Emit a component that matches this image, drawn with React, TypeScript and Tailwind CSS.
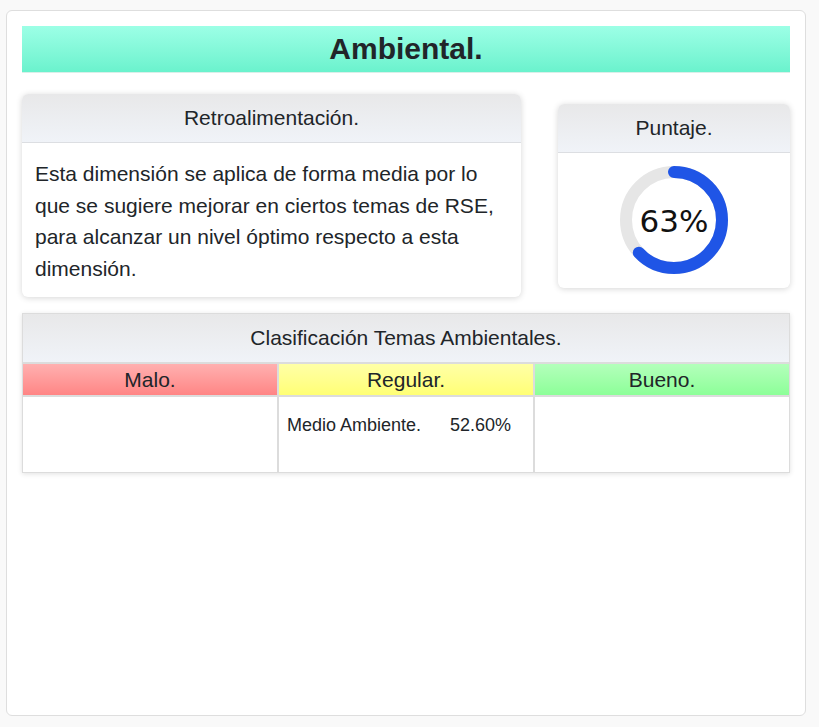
const temas = {
  malo: [] as { nombre: string; valor: string }[],
  regular: [{ nombre: "Medio Ambiente.", valor: "52.60%" }],
  bueno: [] as { nombre: string; valor: string }[],
};

const Ring = ({ value }: { value: number }) => {
  const r = 48;
  const c = 2 * Math.PI * r;
  return (
    <svg width="110" height="110" viewBox="0 0 110 110">
      <circle cx="55" cy="55" r={r} fill="none" stroke="#e6e6e6" strokeWidth="12" />
      <circle
        cx="55"
        cy="55"
        r={r}
        fill="none"
        stroke="#1f55e6"
        strokeWidth="12"
        strokeLinecap="round"
        strokeDasharray={`${(c * value) / 100} ${c}`}
        transform="rotate(-90 55 55)"
      />
      <text
        x="55"
        y="58"
        textAnchor="middle"
        dominantBaseline="middle"
        fontSize="31"
        fill="#111"
        style={{ fontFamily: '"DejaVu Sans", sans-serif' }}
      >
        {value}%
      </text>
    </svg>
  );
};

const Cell = ({ items }: { items: { nombre: string; valor: string }[] }) => (
  <div className="bg-white h-[75px] px-[8px] pt-[15px] text-[18px] text-[#212529]">
    {items.map((t) => (
      <div key={t.nombre} className="flex">
        <span className="w-[163px]">{t.nombre}</span>
        <span>{t.valor}</span>
      </div>
    ))}
  </div>
);

export default function App() {
  return (
    <div
      className="bg-[#f9f9f9] h-[727px] pl-[6px] pt-[10px] text-[#212529]"
      style={{ fontFamily: '"Liberation Sans", Arial, sans-serif' }}
    >
      <div className="w-[800px] h-[706px] bg-white border border-[#dedede] rounded-md px-[15px] pt-[15px]">
        <div className="h-[47px] flex items-center justify-center bg-gradient-to-b from-[#9cffe6] to-[#6af2cd] border-b border-[#d9efe9]">
          <h1 className="text-[30px] font-bold leading-none">Ambiental.</h1>
        </div>

        <div className="flex items-center justify-between mt-[21px]">
          <div className="w-[499px] rounded-md bg-white shadow-[0_1px_6px_rgba(0,0,0,0.16)] overflow-hidden">
            <div className="h-[49px] flex items-center justify-center bg-gradient-to-b from-[#e8e8e9] to-[#f0f3f8] border-b border-[#dcdee2] text-[21px]">
              Retroalimentación.
            </div>
            <p className="px-[13px] pt-[15px] pb-[13px] text-[21px] leading-[31.5px]">
              Esta dimensión se aplica de forma media por lo que se sugiere mejorar en ciertos temas de RSE, para alcanzar un nivel óptimo respecto a esta dimensión.
            </p>
          </div>

          <div className="w-[232px] rounded-md bg-white shadow-[0_1px_6px_rgba(0,0,0,0.16)] overflow-hidden">
            <div className="h-[49px] flex items-center justify-center bg-gradient-to-b from-[#e8e8e9] to-[#f0f3f8] border-b border-[#dcdee2] text-[21px]">
              Puntaje.
            </div>
            <div className="flex justify-center pt-[12px] pb-[13px]">
              <Ring value={63} />
            </div>
          </div>
        </div>

        <div className="mt-[16px] border border-[#dcdcdc] shadow-[0_1px_5px_rgba(0,0,0,0.12)] bg-[#dcdcdc]">
          <div className="h-[48px] flex items-center justify-center bg-gradient-to-b from-[#e8e8e9] to-[#f0f3f8] text-[21px]">
            Clasificación Temas Ambientales.
          </div>
          <div className="grid grid-cols-3 gap-[2px] mt-[2px]">
            <div className="h-[31px] flex items-center justify-center text-[21px] bg-gradient-to-b from-[#ffb0b0] to-[#ff8585]">
              Malo.
            </div>
            <div className="h-[31px] flex items-center justify-center text-[21px] bg-gradient-to-b from-[#ffffa6] to-[#ffff74]">
              Regular.
            </div>
            <div className="h-[31px] flex items-center justify-center text-[21px] bg-gradient-to-b from-[#b3ffbb] to-[#8cff98]">
              Bueno.
            </div>
            <Cell items={temas.malo} />
            <Cell items={temas.regular} />
            <Cell items={temas.bueno} />
          </div>
        </div>
      </div>
    </div>
  );
}
